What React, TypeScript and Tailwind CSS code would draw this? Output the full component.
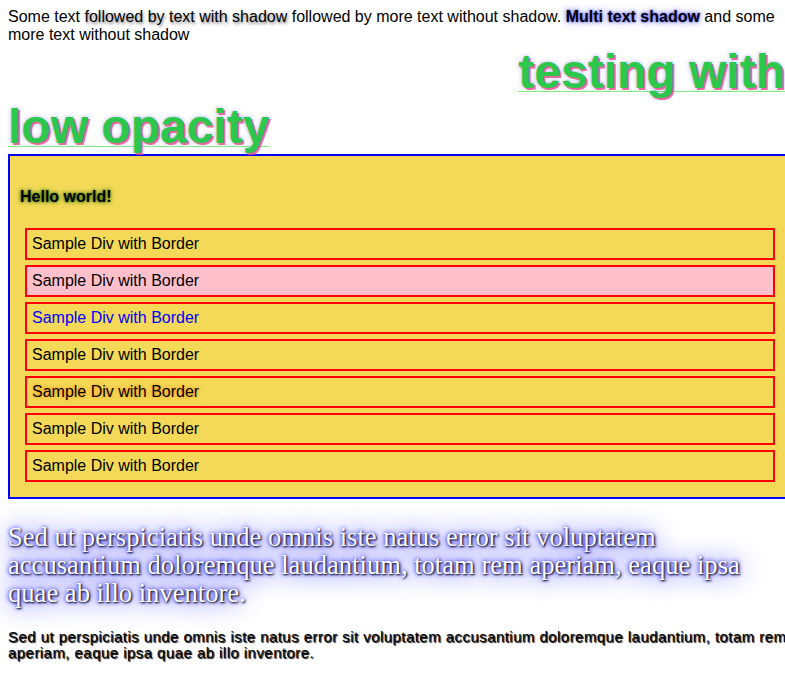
export default function App() {
  const rows = [
    { text: "Sample Div with Border", cls: "" },
    { text: "Sample Div with Border", cls: "bg-[#ffc0cb]" },
    { text: "Sample Div with Border", cls: "text-[#0000ff]" },
    { text: "Sample Div with Border", cls: "" },
    { text: "Sample Div with Border", cls: "[text-shadow:0_0_4px_#ff7f00]" },
    { text: "Sample Div with Border", cls: "" },
    { text: "Sample Div with Border", cls: "" },
  ]

  // underline drawn as a background line so the text shadow doesn't smear it
  const bigUnderline =
    "bg-[linear-gradient(#7cf27c,#7cf27c)] bg-no-repeat bg-[length:100%_1px] bg-[position:0_46px]"

  return (
    <div className="min-h-screen w-full overflow-hidden bg-white font-['Liberation_Sans',Arial,sans-serif] text-black">
      <div className="w-[900px] p-2">
        <p className="w-[769px] text-[16px] leading-[18px]">
          Some text <span className="[text-shadow:1px_2px_3px_rgba(0,0,0,0.5)]">followed by text with shadow</span>{" "}
          followed by more text without shadow.{" "}
          <b className="[text-shadow:0_0_3px_#4040ff,0_0_8px_#8080ff]">Multi text shadow</b> and some more text without
          shadow
        </p>

        <div className="w-[777px] text-[48px] font-bold leading-[55px] text-[#2cc84b] [text-shadow:2px_2px_0_rgba(232,70,130,0.8),0_0_4px_rgba(90,90,255,0.5)]">
          <div className="text-right">
            <span className={bigUnderline}>testing with</span>
          </div>
          <div>
            <span className={bigUnderline}>low opacity</span>
          </div>
        </div>

        <div className="w-[800px] border-2 border-[#0000ff] bg-[#f3d957] pb-[15px] pl-[10px] pt-[32px]">
          <h3 className="text-[16px] font-bold leading-[18px] [text-shadow:0_0_3px_#2f6a00,0_0_5px_#5a8a10]">
            Hello world!
          </h3>
          <div className="ml-[5px] mt-[22px] flex w-[750px] flex-col gap-[5px]">
            {rows.map((row, index) => (
              <div
                key={index}
                className={`flex h-[32px] items-center border-2 border-[#ff0000] px-[5px] text-[16px] ${row.cls}`}
              >
                {row.text}
              </div>
            ))}
          </div>
        </div>

        <p className="mt-[24px] w-[769px] font-['Liberation_Serif',Georgia,serif] text-[26.6px] leading-[28px] text-white [text-shadow:1px_1px_2px_black,0_0_1em_blue,0_0_0.2em_blue]">
          Sed ut perspiciatis unde omnis iste natus error sit voluptatem accusantium doloremque laudantium, totam rem
          aperiam, eaque ipsa quae ab illo inventore.
        </p>

        <p className="mt-[22px] w-[800px] text-[15px] leading-[16px] tracking-[0.45px] [text-shadow:1px_1px_1px_black]">
          Sed ut perspiciatis unde omnis iste natus error sit voluptatem accusantium doloremque laudantium, totam rem
          aperiam, eaque ipsa quae ab illo inventore.
        </p>
      </div>
    </div>
  )
}
